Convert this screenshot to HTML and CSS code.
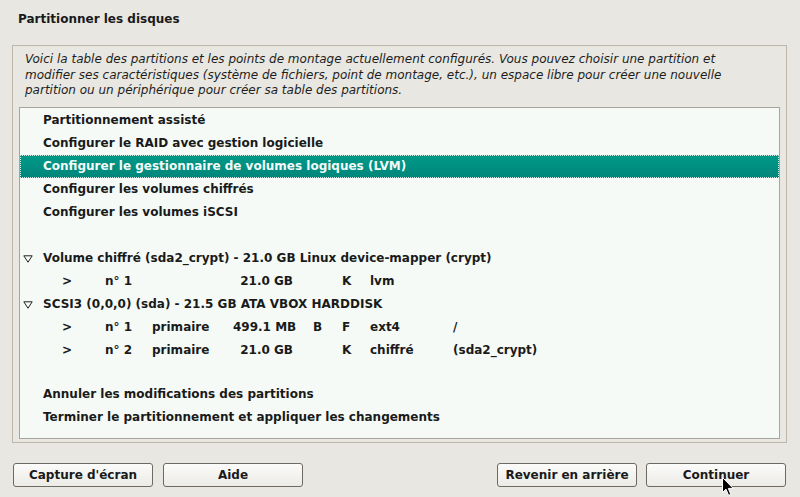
FILE: index.html
```html
<!DOCTYPE html>
<html lang="fr">
<head>
<meta charset="utf-8">
<title>Partitionner les disques</title>
<link rel="stylesheet" href="styles.css">
</head>
<body>
<div class="page">
  <h1 class="title">Partitionner les disques</h1>
  <div class="frame">
    <p class="desc">Voici la table des partitions et les points de montage actuellement configurés. Vous pouvez choisir une partition et modifier ses caractéristiques (système de fichiers, point de montage, etc.), un espace libre pour créer une nouvelle partition ou un périphérique pour créer sa table des partitions.</p>
    <div class="list">
      <div class="row item">Partitionnement assisté</div>
      <div class="row item">Configurer le RAID avec gestion logicielle</div>
      <div class="row item selected">Configurer le gestionnaire de volumes logiques (LVM)</div>
      <div class="row item">Configurer les volumes chiffrés</div>
      <div class="row item">Configurer les volumes iSCSI</div>
      <div class="row"></div>
      <div class="row disk"><svg class="tri" viewBox="0 0 10 8" width="10" height="8"><path d="M0.8 0.8 H9.2 L5 7.2 Z" fill="none" stroke="#222" stroke-width="1"/></svg><span>Volume chiffré (sda2_crypt) - 21.0 GB Linux device-mapper (crypt)</span></div>
      <div class="row part"><span>&gt;</span><span>n° 1</span><span></span><span class="size">21.0 GB</span><span></span><span>K</span><span>lvm</span><span></span></div>
      <div class="row disk"><svg class="tri" viewBox="0 0 10 8" width="10" height="8"><path d="M0.8 0.8 H9.2 L5 7.2 Z" fill="none" stroke="#222" stroke-width="1"/></svg><span>SCSI3 (0,0,0) (sda) - 21.5 GB ATA VBOX HARDDISK</span></div>
      <div class="row part"><span>&gt;</span><span>n° 1</span><span>primaire</span><span class="size">499.1 MB</span><span>B</span><span>F</span><span>ext4</span><span>/</span></div>
      <div class="row part"><span>&gt;</span><span>n° 2</span><span>primaire</span><span class="size">21.0 GB</span><span></span><span>K</span><span>chiffré</span><span>(sda2_crypt)</span></div>
      <div class="row spacer"></div>
      <div class="row item">Annuler les modifications des partitions</div>
      <div class="row item">Terminer le partitionnement et appliquer les changements</div>
    </div>
  </div>
  <div class="buttons">
    <div class="group">
      <button class="btn">Capture d'écran</button>
      <button class="btn">Aide</button>
    </div>
    <div class="group">
      <button class="btn">Revenir en arrière</button>
      <button class="btn">Continuer</button>
    </div>
  </div>
  <svg class="cursor" width="13" height="20" viewBox="0 0 13 20"><path d="M0.5 0.5 V15.5 L4 12.2 L6.6 18.3 L8.8 17.4 L6.3 11.4 H11.2 Z" fill="#000" stroke="#fff" stroke-width="1"/></svg>
</div>
</body>
</html>
```
FILE: styles.css
```css
* { box-sizing: border-box; }
html, body {
  margin: 0;
  padding: 0;
  background: #e8e7e1;
}
body {
  font-family: "DejaVu Sans", sans-serif;
  font-size: 12px;
  color: #1a1a1a;
  width: 800px;
  height: 497px;
  overflow: hidden;
}
.page {
  position: relative;
  width: 800px;
  height: 497px;
}
.title {
  margin: 0;
  padding: 12px 0 0 18px;
  height: 45px;
  font-size: 12px;
  font-weight: bold;
  line-height: 14px;
}
.frame {
  margin: 0 13px 0 12px;
  border: 1px solid #bdb7aa;
  padding: 6px 6px 4px 6px;
  height: 398px;
}
.desc {
  margin: 0 18px 8px 6px;
  font-style: italic;
  line-height: 15.5px;
  font-size: 12px;
  color: #1e1e1e;
}
.list {
  border: 1px solid #a8a49c;
  background: #f5faf7;
  height: 332px;
  padding-top: 1px;
}
.row {
  height: 23px;
  line-height: 23px;
  font-weight: bold;
  white-space: nowrap;
}
.spacer {
  height: 21px;
}
.item {
  padding-left: 23px;
}
.selected {
  background: linear-gradient(#009a88, #00857a);
  color: #f4fbf9;
  outline: 1px dotted #cfe9e3;
  outline-offset: -1px;
}
.disk {
  display: flex;
  align-items: center;
  padding-left: 3px;
}
.tri {
  margin-right: 10px;
  margin-top: 1px;
}
.part {
  display: grid;
  grid-template-columns: 43px 47px 81px 60px 20px 29px 28px 83px auto;
  padding-left: 42px;
}
.part .size {
  text-align: right;
  grid-column: 4;
}
.part span:nth-child(5) { grid-column: 6; }
.part span:nth-child(6) { grid-column: 7; }
.part span:nth-child(7) { grid-column: 8; }
.part span:nth-child(8) { grid-column: 9; }
.buttons {
  display: flex;
  justify-content: space-between;
  padding: 20px 14px 0 13px;
}
.group {
  display: flex;
  gap: 10px;
}
.group + .group { gap: 9px; }
.btn {
  width: 140px;
  height: 24px;
  border: 1px solid #6e6a63;
  border-radius: 3px;
  background: linear-gradient(#fbfbfa, #ecebe6);
  font-family: "DejaVu Sans", sans-serif;
  font-weight: bold;
  font-size: 12px;
  color: #1a1a1a;
  padding: 0;
}
.cursor {
  position: absolute;
  left: 722px;
  top: 477px;
}
```
